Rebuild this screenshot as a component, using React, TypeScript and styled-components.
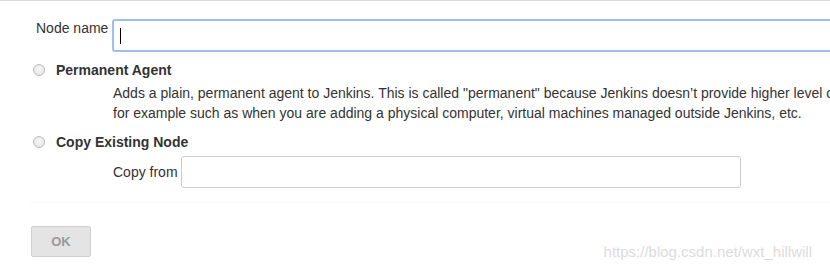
import React from "react";
import styled, { createGlobalStyle } from "styled-components";

const GlobalStyle = createGlobalStyle`
  body {
    margin: 0;
    background: #ffffff;
    font-family: "Liberation Sans", Arial, sans-serif;
    font-size: 14px;
    color: #333333;
    overflow: hidden;
  }
`;

const Page = styled.div`
  position: relative;
  width: 830px;
  height: 272px;
  border-top: 1px solid #d9d9d9;
  box-sizing: border-box;
  overflow: hidden;
`;

const NameRow = styled.div`
  display: flex;
  align-items: flex-start;
  gap: 4px;
  padding: 18px 0 0 36px;
`;

const Label = styled.label<{ $top?: number }>`
  line-height: 16px;
  margin-top: ${(p) => p.$top ?? 0}px;
  white-space: nowrap;
`;

const Field = styled.div<{ $focused?: boolean; $width: number; $height: number }>`
  flex: 0 0 ${(p) => p.$width}px;
  height: ${(p) => p.$height}px;
  box-sizing: border-box;
  display: flex;
  align-items: center;
  padding-left: 6px;
  background: #ffffff;
  border: ${(p) => (p.$focused ? "2px solid #9dbdf3" : "1px solid #cccccc")};
  border-radius: 3px;
`;

const Caret = styled.span`
  width: 1px;
  height: 16px;
  background: #000000;
`;

const Option = styled.div<{ $gapTop: number }>`
  display: flex;
  align-items: center;
  gap: 11px;
  margin-top: ${(p) => p.$gapTop}px;
  padding-left: 33px;
  line-height: 16px;
`;

const Radio = styled.span`
  width: 12px;
  height: 12px;
  box-sizing: border-box;
  border-radius: 50%;
  border: 1px solid #bdbdbd;
  background: radial-gradient(circle at 50% 40%, #f7f7f7 0%, #e2e2e2 100%);
`;

const OptionTitle = styled.span`
  font-weight: bold;
`;

const Description = styled.div`
  margin: 5px 0 0 113px;
  line-height: 20px;
  white-space: nowrap;
`;

const CopyRow = styled.div`
  display: flex;
  align-items: center;
  gap: 3px;
  margin: 6px 0 0 113px;
`;

const Divider = styled.div`
  margin: 14px 0 0 30px;
  border-top: 1px dotted #f8f8f8;
`;

const Button = styled.button`
  display: block;
  margin: 23px 0 0 31px;
  width: 60px;
  height: 31px;
  background: #e4e4e4;
  border: 1px solid #cfcfcf;
  border-radius: 2px;
  color: #9a9a9a;
  font-family: "Liberation Sans", Arial, sans-serif;
  font-size: 13px;
  font-weight: bold;
`;

const Watermark = styled.div`
  position: absolute;
  right: 18px;
  bottom: 12px;
  font-size: 15px;
  color: #dcdcdc;
`;

export default function App() {
  return (
    <>
      <GlobalStyle />
      <Page>
        <NameRow>
          <Label $top={1}>Node name</Label>
          <Field $focused $width={760} $height={33}>
            <Caret />
          </Field>
        </NameRow>

        <Option $gapTop={10}>
          <Radio />
          <OptionTitle>Permanent Agent</OptionTitle>
        </Option>
        <Description>
          Adds a plain, permanent agent to Jenkins. This is called "permanent" because Jenkins doesn’t provide higher level of integration with these agents, such as dynamic provisioning. Select this type if no other agent types apply —
          <br />
          for example such as when you are adding a physical computer, virtual machines managed outside Jenkins, etc.
        </Description>

        <Option $gapTop={11}>
          <Radio />
          <OptionTitle>Copy Existing Node</OptionTitle>
        </Option>
        <CopyRow>
          <Label>Copy from</Label>
          <Field $width={560} $height={32} />
        </CopyRow>

        <Divider />
        <Button>OK</Button>
        <Watermark>https://blog.csdn.net/wxt_hillwill</Watermark>
      </Page>
    </>
  );
}
